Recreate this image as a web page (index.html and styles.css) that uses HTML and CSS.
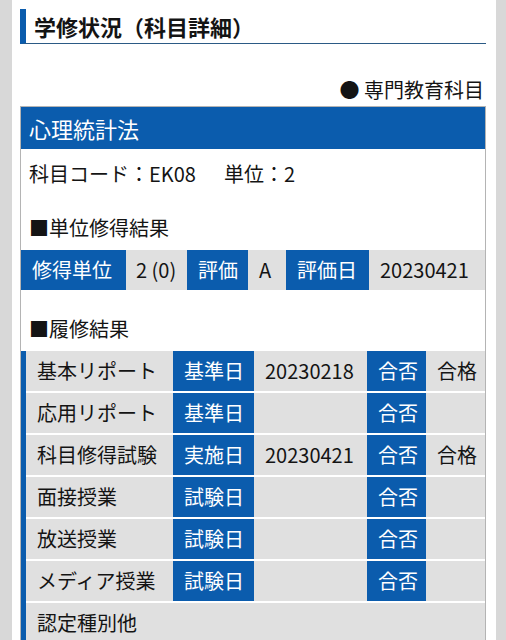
FILE: index.html
```html
<!DOCTYPE html>
<html lang="ja">
<head>
  <meta charset="UTF-8">
  <meta name="viewport" content="width=device-width, initial-scale=1.0">
  <title>学修状況（科目詳細）</title>
  <link rel="stylesheet" href="styles.css">
</head>
<body>
  <div id="page">
    <h1 class="page-title">学修状況（科目詳細）</h1>
    <div class="category">● 専門教育科目</div>

    <div class="card">
      <div class="card-title">心理統計法</div>
      <div class="info">科目コード：EK08<span class="unit">単位：2</span></div>

      <!-- 単位修得結果 -->
      <div class="sub-title">■単位修得結果</div>
      <div class="result-row">
        <div class="label">修得単位</div>
        <div class="value">2 (0)</div>
        <div class="label">評価</div>
        <div class="value">A</div>
        <div class="label">評価日</div>
        <div class="value">20230421</div>
      </div>

      <!-- 履修結果 -->
      <div class="sub-title">■履修結果</div>
      <div class="history">
        <div class="row">
          <div class="name">基本リポート</div>
          <div class="label">基準日</div>
          <div class="value">20230218</div>
          <div class="label">合否</div>
          <div class="value">合格</div>
        </div>
        <div class="row">
          <div class="name">応用リポート</div>
          <div class="label">基準日</div>
          <div class="value"></div>
          <div class="label">合否</div>
          <div class="value"></div>
        </div>
        <div class="row">
          <div class="name">科目修得試験</div>
          <div class="label">実施日</div>
          <div class="value">20230421</div>
          <div class="label">合否</div>
          <div class="value">合格</div>
        </div>
        <div class="row">
          <div class="name">面接授業</div>
          <div class="label">試験日</div>
          <div class="value"></div>
          <div class="label">合否</div>
          <div class="value"></div>
        </div>
        <div class="row">
          <div class="name">放送授業</div>
          <div class="label">試験日</div>
          <div class="value"></div>
          <div class="label">合否</div>
          <div class="value"></div>
        </div>
        <div class="row">
          <div class="name">メディア授業</div>
          <div class="label">試験日</div>
          <div class="value"></div>
          <div class="label">合否</div>
          <div class="value"></div>
        </div>
        <div class="row other">
          <div class="name">認定種別他</div>
        </div>
      </div>
    </div>
  </div>
</body>
</html>
```

FILE: styles.css
```css
body {
  margin: 0;
  background-color: #d8d8d8;
  font-family: "Noto Sans CJK JP", "Noto Sans", sans-serif;
  color: #141414;
}
#page {
  margin: 0 10px 0 12px;
  padding: 9px 10px 40px 8px;
  background-color: #fff;
  min-height: 640px;
}
.page-title {
  margin: 0;
  height: 34px;
  line-height: 34px;
  padding-left: 8px;
  border-left: 6px solid #0b5cad;
  border-bottom: 1px solid #2b5a85;
  font-size: 22px;
  font-weight: bold;
}
.category {
  margin-top: 31px;
  padding-right: 2px;
  line-height: 30px;
  text-align: right;
  font-size: 20px;
}
/* Card */
.card {
  margin-top: 1px;
  border: 1px solid #b4b4b4;
  border-bottom: none;
}
.card-title {
  height: 42px;
  line-height: 42px;
  padding: 0 8px;
  background-color: #0b5cad;
  color: #fff;
  font-size: 22px;
}
.info {
  margin-top: 10px;
  padding: 0 8px;
  line-height: 30px;
  font-size: 20px;
}
.info .unit {
  margin-left: 28px;
}
.sub-title {
  margin: 24px 0 7px;
  padding: 0 8px;
  line-height: 30px;
  font-size: 20px;
}
.label {
  background-color: #0b5cad;
  color: #fff;
}
.value, .name {
  background-color: #e0e0e0;
}
/* 単位修得結果 */
.result-row {
  display: grid;
  grid-template-columns: 105px 61px 61px 38px 83px 1fr;
  height: 40px;
  line-height: 40px;
  font-size: 20px;
}
.result-row > div {
  padding-left: 11px;
  white-space: nowrap;
}
.result-row > div:nth-child(2) {
  padding-left: 10px;
}
/* 履修結果 */
.history {
  border-left: 5px solid #0b5cad;
}
.history .row {
  display: grid;
  grid-template-columns: 147px 81px 113px 59px 1fr;
  font-size: 20px;
}
.history .row > div {
  height: 40px;
  line-height: 40px;
  padding-left: 11px;
  border-bottom: 2px solid #fff;
  white-space: nowrap;
}
.history .row.other {
  grid-template-columns: 1fr;
}
```
